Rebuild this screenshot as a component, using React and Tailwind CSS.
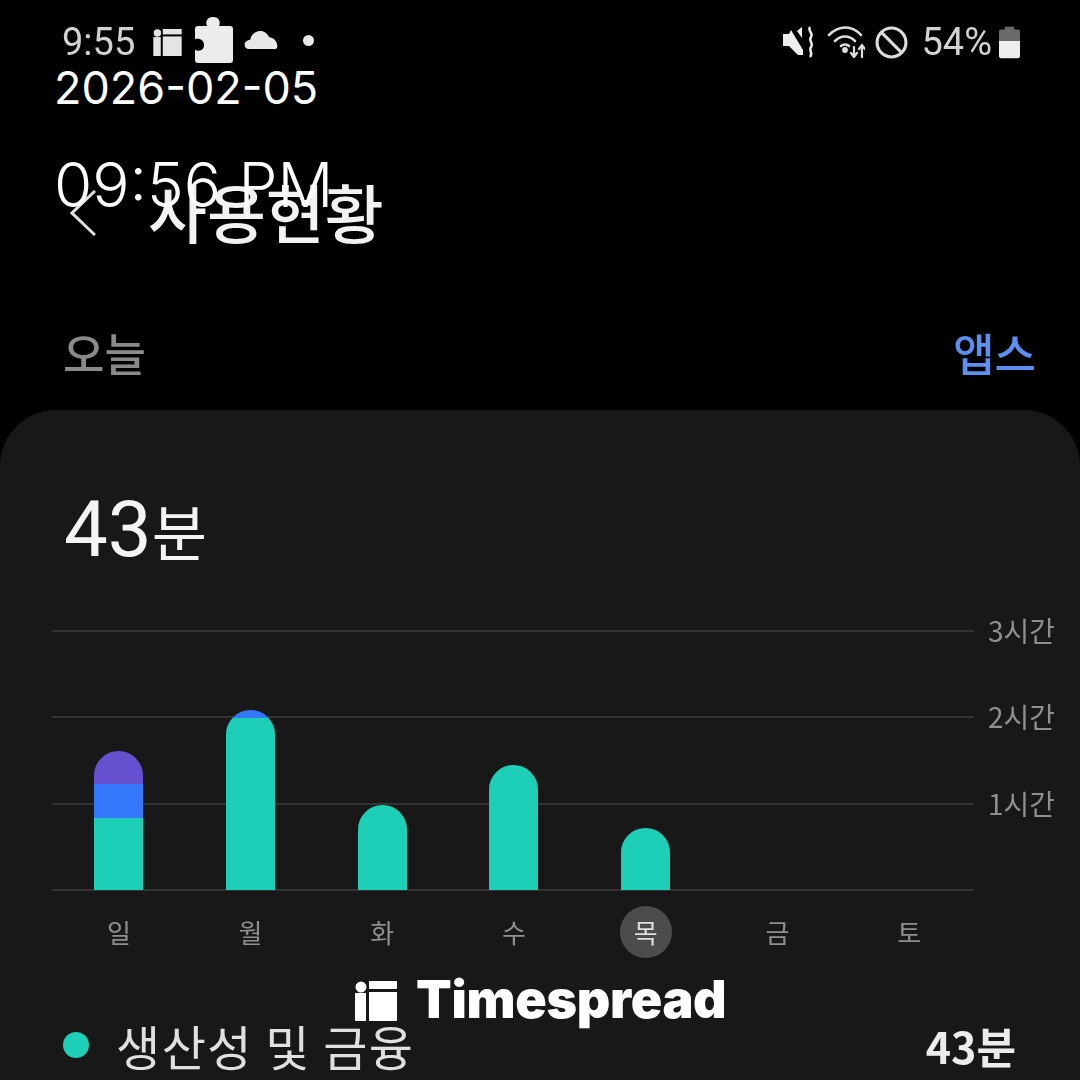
import React from 'react';

const KR = "font-['Noto_Sans_CJK_KR','Noto_Sans',sans-serif]";

function LogoMark({ className }) {
  return (
    <svg viewBox="0 0 42 40" className={className} fill="currentColor">
      <circle cx="6" cy="6" r="5.5" />
      <rect x="0" y="12" width="11" height="28" />
      <rect x="14" y="0" width="28" height="8" />
      <rect x="14" y="11" width="28" height="29" />
    </svg>
  );
}

function StatusBar() {
  return (
    <div className="h-[84px] pl-[62px] pr-[60px] flex items-center justify-between text-[#d2d2d2] font-['Roboto',sans-serif] blur-[0.6px]">
      <div className="flex items-center">
        <span className="text-[38px] leading-none">9:55</span>
        <LogoMark className="w-[29px] h-[27px] ml-[18px] text-[#e4e4e4]" />
        {/* puzzle piece */}
        <svg viewBox="0 0 38 46" className="w-[38px] h-[46px] ml-[13px] mb-[4px] text-[#ececec]" fill="currentColor">
          <path d="M0 12 C0 10 1 9 3 9 H12 C10 5 12 0 18 0 C24 0 26 5 24 9 H35 C37 9 38 10 38 12 V43 C38 45 37 46 35 46 H3 C1 46 0 45 0 43 V33 C6 35 9 32 9 28 C9 24 6 21 0 22 Z" />
        </svg>
        <svg viewBox="0 0 36 22" className="w-[34px] h-[20px] ml-[11px] mb-[4px] text-[#e8e8e8]" fill="currentColor">
          <path d="M5 21 C1 21 0 18 0 16 C0 13 3 11 6 11 C7 5 12 1 17 1 C22 1 25 4 27 8 C32 8 36 13 36 18 C36 20 35 21 34 21 Z" />
        </svg>
        <span className="w-[11px] h-[11px] rounded-full bg-[#e8e8e8] ml-[25px] mb-[3px]" />
      </div>
      <div className="flex items-center">
        {/* mute */}
        <svg viewBox="0 0 32 32" className="w-[32px] h-[32px] text-[#eee]" fill="none" stroke="currentColor">
          <path d="M0 8 H6 L8 4 L20 24 V29 H15 L6 20 H0 Z" fill="currentColor" stroke="none" />
          <path d="M14 5 L19 1 V12 Z" fill="currentColor" stroke="none" />
          <path d="M27 1 C24 5 31 7 28 11 C25 15 31 17 28 21 C25 25 31 27 27 31" strokeWidth="2.4" />
        </svg>
        <svg viewBox="0 0 38 32" className="w-[38px] h-[32px] ml-[12px] text-[#ddd]" fill="none" stroke="currentColor" strokeWidth="2.6" strokeLinecap="round">
          <path d="M2 9 C12 -1 25 -1 34 9" />
          <path d="M8 15 C14 9 22 9 28 15" />
          <path d="M14 20 C16 18 20 18 22 20" />
          <circle cx="18" cy="24" r="1.6" fill="currentColor" />
          <path d="M27 21 V30 M24 27 L27 31 L30 27" strokeWidth="2.2" />
          <path d="M35 31 V20 M32 23 L35 19 L38 23" strokeWidth="2.2" />
        </svg>
        <svg viewBox="0 0 32 32" className="w-[33px] h-[33px] ml-[10px] text-[#ddd]" fill="none" stroke="currentColor" strokeWidth="3">
          <circle cx="16" cy="16" r="14" />
          <path d="M6 6 L26 26" />
        </svg>
        <span className="text-[38px] leading-none ml-[13px]">54%</span>
        <svg viewBox="0 0 22 34" className="w-[21px] h-[34px] ml-[7px]">
          <path d="M6 4 V1 H16 V4 H20 C21 4 22 5 22 6 V16 H0 V6 C0 5 1 4 2 4 Z" fill="#6a6a6a" />
          <path d="M0 16 H22 V32 C22 33 21 34 20 34 H2 C1 34 0 33 0 32 Z" fill="#eeeeee" />
        </svg>
      </div>
    </div>
  );
}

function Bar({ segments }) {
  return (
    <div className="w-[49px] rounded-t-[25px] overflow-hidden flex flex-col">
      {segments.map(([color, h], i) => (
        <div key={i} className={color} style={{ height: h }} />
      ))}
    </div>
  );
}

const TEAL = 'bg-[#1dcfb7]';
const BLUE = 'bg-[#3577fb]';
const PURPLE = 'bg-[#6650cf]';

const bars = [
  [[PURPLE, 33], [BLUE, 34], [TEAL, 72]],
  [[BLUE, 8], [TEAL, 172]],
  [[TEAL, 85]],
  [[TEAL, 125]],
  [[TEAL, 62]],
  [],
  [],
];

const days = ['일', '월', '화', '수', '목', '금', '토'];

function Chart() {
  return (
    <div className="mt-[61px] relative pl-[52px]">
      <div className="h-[261px] flex flex-col justify-between">
        {['3시간', '2시간', '1시간', ''].map((label) => (
          <div key={label} className="h-[2px] flex items-center">
            <div className="w-[922px] h-[2px] bg-[#333333] shrink-0" />
            <span className="ml-[14px] mb-[2px] text-[28px] leading-none text-[#8f8f8f] whitespace-nowrap">{label}</span>
          </div>
        ))}
      </div>
      {/* bars sit over the grid lines */}
      <div className="absolute left-[53px] bottom-[68px] w-[922px] grid grid-cols-7 items-end justify-items-center">
        {bars.map((segments, i) => (
          <Bar key={i} segments={segments} />
        ))}
      </div>
      <div className="w-[922px] ml-[1px] grid grid-cols-7 justify-items-center mt-[15px]">
        {days.map((d) => (
          <div
            key={d}
            className={`w-[52px] h-[52px] rounded-full flex items-center justify-center text-[26px] leading-none ${d === '목' ? 'bg-[#4c4c4c] text-[#dedede]' : 'text-[#8f8f8f]'}`}
          >
            {d}
          </div>
        ))}
      </div>
    </div>
  );
}

export default function App() {
  return (
    <div className={`relative w-[1080px] h-[1080px] overflow-hidden bg-black ${KR}`}>
      <StatusBar />

      <div className="blur-[0.6px]">
        {/* Header */}
        <div className="h-[230px] pl-[70px] flex items-center pt-[22px] pb-[0px]">
          <svg viewBox="0 0 26 46" className="w-[26px] h-[46px] text-[#e0e0e0] mt-[6px]" fill="none" stroke="currentColor" strokeWidth="3">
            <path d="M25 1 L2 23 L25 45" />
          </svg>
          <h1 className="ml-[52px] text-[64px] leading-none font-medium text-[#f2f2f2] whitespace-nowrap">사용현황</h1>
        </div>

        {/* Tabs */}
        <div className="h-[76px] pr-[44px] pl-[63px] flex items-center justify-between text-[45px] leading-none">
          <span className="text-[#8a8a8a] font-medium">오늘</span>
          <span className="text-[#5b8ff0] font-medium">앱스</span>
        </div>

        {/* Card */}
        <div className="mt-[20px] h-[670px] bg-[#181818] rounded-t-[56px]">
          <div className="pt-[81px] pl-[64px] flex items-baseline text-[#f4f4f4] leading-none">
            <span className="text-[78px] font-['Roboto',sans-serif]">43</span>
            <span className="text-[60px]">분</span>
          </div>
          <Chart />
          <div className="mt-[63px] pl-[63px] pr-[64px] flex items-center justify-between">
            <div className="flex items-center">
              <span className="w-[26px] h-[26px] rounded-full bg-[#1dcfb7]" />
              <span className="ml-[27px] text-[48px] leading-none text-[#e0e0e0] tracking-[1.5px]">생산성 및 금융</span>
            </div>
            <span className="text-[43px] leading-none font-semibold text-[#ececec]">43분</span>
          </div>
        </div>
      </div>

      {/* Burned-in date stamp */}
      <div className="absolute left-[54px] top-[60px] text-white font-['Inter',sans-serif]">
        <div className="text-[45px] leading-[55px]">2026-02-05</div>
        <div className="text-[62px] leading-[75px] mt-[32px] font-light">09:56 PM</div>
      </div>

      {/* Watermark */}
      <div className="absolute left-[355px] top-[974px] flex items-center text-white">
        <LogoMark className="w-[42px] h-[40px] mt-[2px]" />
        <span className="ml-[19px] text-[52px] leading-none font-black font-['Inter',sans-serif] tracking-[-0.3px]">Timespread</span>
      </div>
    </div>
  );
}
